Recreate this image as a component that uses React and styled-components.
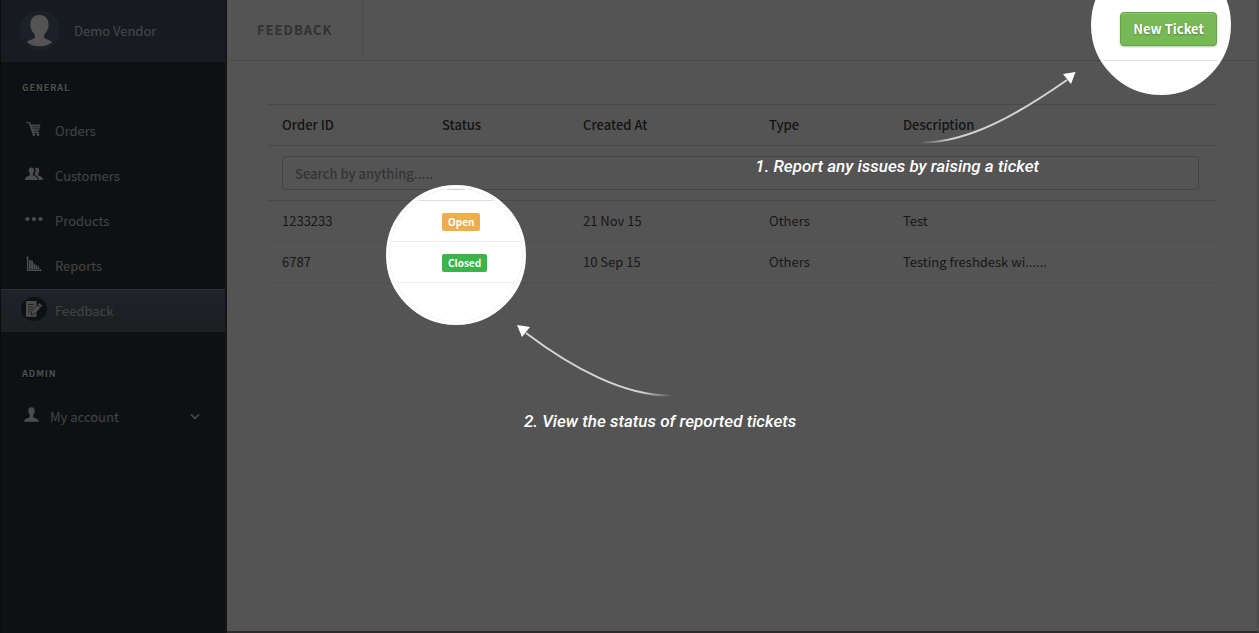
import React from "react";
import styled, { createGlobalStyle, css } from "styled-components";

const GlobalStyle = createGlobalStyle`
  *, *::before, *::after { box-sizing: border-box; }
  body {
    margin: 0;
    background: #fff;
    color: #4a4a4a;
    font-family: "Noto Sans CJK SC", "Open Sans", sans-serif;
    font-size: 13px;
    line-height: 20px;
  }
`;

const Page = styled.div`
  position: relative;
  display: flex;
  min-height: 100vh;
  overflow: hidden;
`;

/* ---------- sidebar ---------- */

const Sidebar = styled.aside`
  flex: 0 0 227px;
  background: #2b363d;
  border-right: 2px solid #394349;
  border-left: 1px solid #20282d;
`;

const Profile = styled.div`
  display: flex;
  align-items: center;
  gap: 14px;
  height: 62px;
  padding-left: 18px;
  background: linear-gradient(#465064, #4a5763);
  border-bottom: 1px solid #56626c;
  color: #d3d7db;
  font-size: 13px;
`;

const Avatar = styled.svg`
  width: 41px;
  height: 41px;
`;

const NavHeading = styled.h2`
  margin: 0;
  padding: 16px 0 0 21px;
  color: #f0f0f0;
  font-size: 9px;
  font-weight: 700;
  line-height: 20px;
  letter-spacing: 1px;
  text-shadow: 0 1px 1px #000;
`;

const NavList = styled.ul`
  display: flex;
  flex-direction: column;
  gap: 2px;
  margin: 0;
  padding: 11px 0 16px;
  list-style: none;
`;

const NavLink = styled.a`
  display: flex;
  align-items: center;
  gap: 8px;
  height: 43px;
  padding: 0 25px 0 20px;
  color: #c8ccce;
  text-decoration: none;
  ${(p) =>
    p.$active &&
    css`
      background: linear-gradient(#606879, #565c67);
      border-top: 1px solid #878c95;
      border-bottom: 1px solid #5f6670;
    `}
`;

const NavIcon = styled.span`
  display: flex;
  align-items: center;
  justify-content: center;
  width: ${(p) => (p.$narrow ? "21px" : "26px")};
  height: 24px;
  margin-bottom: 4px;
  border-radius: 50%;
  color: #e6e6e6;
  background: ${(p) => (p.$active ? "#2b363d" : "none")};
`;

const NavText = styled.span`
  flex: 1;
`;

/* ---------- main area ---------- */

const Main = styled.main`
  flex: 1;
  min-width: 0;
  border-right: 2px solid #e2e2e2;
  border-bottom: 2px solid #8c8488;
`;

const TopBar = styled.header`
  display: flex;
  align-items: center;
  justify-content: space-between;
  height: 61px;
  padding-right: 40px;
  border-bottom: 1px solid #dfdfdf;
`;

const PageTitle = styled.h1`
  display: flex;
  align-items: center;
  align-self: stretch;
  width: 136px;
  margin: 0;
  padding-left: 30px;
  border-right: 1px solid #e2e2e2;
  color: #989898;
  font-size: 13px;
  font-weight: 700;
  letter-spacing: 1px;
`;

const NewTicket = styled.button`
  height: 34px;
  margin-bottom: 2px;
  padding: 0 12px;
  border: 1px solid #64a540;
  border-radius: 4px;
  background: #77b955;
  box-shadow: inset 0 1px 0 #8fc972, 0 1px 2px rgba(0, 0, 0, 0.25);
  color: #fff;
  font: 700 13px/20px "Noto Sans CJK SC", "Open Sans", sans-serif;
  text-shadow: 0 1px 2px rgba(0, 0, 0, 0.3);
`;

const Content = styled.section`
  padding: 43px 40px 40px;
`;

const Table = styled.table`
  width: 100%;
  border-collapse: collapse;
  table-layout: fixed;
  text-align: left;
`;

const Col = styled.col`
  width: ${(p) => p.$width};
`;

const HeadCell = styled.th`
  height: 41px;
  padding: 0 15px;
  border-top: 1px solid #dcdcdc;
  border-bottom: 1px solid #dcdcdc;
  color: #404040;
  font-weight: 500;
`;

const SearchCell = styled.td`
  padding: 10px 18px 10px 15px;
  border-bottom: 1px solid #d8dfe6;
`;

const SearchInput = styled.input`
  display: block;
  width: 100%;
  height: 34px;
  padding: 0 12px;
  border: 1px solid #cacaca;
  border-radius: 4px;
  background: #fff;
  font: 500 13px/20px "Noto Sans CJK SC", "Open Sans", sans-serif;
  &::placeholder { color: #a0a0a0; opacity: 1; }
`;

const Cell = styled.td`
  height: 41px;
  padding: 0 15px;
  border-bottom: 1px solid #edf0f2;
`;

const Badge = styled.span`
  display: inline-block;
  padding: 0 6px;
  border-radius: 2px;
  background: ${(p) => (p.$open ? "#f0ad4e" : "#3ab54a")};
  color: #fff;
  font-size: 10px;
  font-weight: 700;
  line-height: 18px;
  vertical-align: middle;
`;

/* ---------- guided tour ---------- */

const Dim = styled.div`
  position: absolute;
  inset: 0;
  background: rgba(0, 0, 0, 0.67);
  pointer-events: none;
  mask-image:
    radial-gradient(circle at 456px 255px, transparent 68px, #000 69px),
    radial-gradient(circle at calc(100% - 98px) 25px, transparent 68px, #000 69px);
  mask-composite: intersect;
`;

const Spotlight = styled.div`
  position: absolute;
  width: 140px;
  height: 140px;
  border: 3px solid #fff;
  border-radius: 50%;
  pointer-events: none;
`;

const TicketSpotlight = styled(Spotlight)`
  top: -45px;
  right: 28px;
`;

const StatusSpotlight = styled(Spotlight)`
  top: 185px;
  left: 386px;
  box-shadow: inset 0 0 0 1px #f3f3f3;
`;

const Hint = styled.p`
  position: absolute;
  margin: 0;
  color: #fff;
  font: italic 500 17px/20px Roboto, sans-serif;
  white-space: nowrap;
`;

const TicketHint = styled(Hint)`
  top: 156px;
  right: 220px;
`;

const StatusHint = styled(Hint)`
  top: 411px;
  left: 524px;
`;

const Arrow = styled.svg`
  position: absolute;
  width: 160px;
  height: 80px;
  pointer-events: none;
`;

const TicketArrow = styled(Arrow)`
  top: 68px;
  right: 179px;
`;

const StatusArrow = styled(Arrow)`
  top: 321px;
  left: 513px;
`;

/* ---------- icons ---------- */

const CartIcon = () => (
  <svg width="16" height="16" viewBox="0 0 16 16" aria-hidden="true">
    <path d="M.5 1.600h2.900L6.600 11.200h6" fill="none" stroke="currentColor" strokeWidth="1.400" />
    <path d="M4 3.400h10.600l-1.800 6.600H6.300z" fill="currentColor" />
    <path d="M5 5.600h9M5.800 7.700h7.600M7.600 3.600l.8 6.200M10 3.600v6.200M12.400 3.600l-.8 6.200" stroke="#2b363d" strokeWidth=".4" />
    <circle cx="7.800" cy="13.500" r="1.400" fill="currentColor" />
    <circle cx="12" cy="13.500" r="1.400" fill="currentColor" />
  </svg>
);

const PeopleIcon = () => (
  <svg width="18" height="14" viewBox="0 0 18 14" fill="currentColor" aria-hidden="true">
    <path d="M6.4.4c2 0 2.8 1.3 2.7 3.1-.1 1.500-.6 2.300-1.200 3.100v1.700c.5.8 4.300 1.200 4.600 3.200l.2 1.500H0l.2-1.500c.3-2 4-2.400 4.700-3.200V6.600C4.300 5.800 3.800 5 3.700 3.500 3.600 1.700 4.400.4 6.400.4z" />
    <path d="M11.600.7c2 0 2.800 1.200 2.700 3-.1 1.400-.6 2.100-1.100 2.900v1.600c.5.8 4.200 1.300 4.500 3.300l.2 1.500h-4.200c-.1-2.800-1.400-3.900-3.800-4.700l-.3-1.500c1.200-1.500 1.500-4 .4-5.700.4-.3.900-.4 1.600-.4z" />
  </svg>
);

const DotsIcon = () => (
  <svg width="18" height="6" viewBox="0 0 18 6" fill="currentColor" aria-hidden="true">
    <circle cx="2.500" cy="3" r="2.100" />
    <circle cx="9" cy="3" r="2.100" />
    <circle cx="15.500" cy="3" r="2.100" />
  </svg>
);

const ChartIcon = () => (
  <svg width="16" height="16" viewBox="0 0 16 16" aria-hidden="true">
    <path d="M1.500 1.500v12.800H15" fill="none" stroke="currentColor" strokeWidth="1.200" />
    <path d="M0 2.500 1.500 0 3 2.500zM14 12.800l2 1.500-2 1.500z" fill="currentColor" />
    <path d="M2.800 4h1.900v9.600H2.800zM5.100 4.800H7v8.800H5.100zM7.400 7.500h1.800v6.100H7.400zM9.600 9h1.600v4.600H9.600zM11.600 10.500h1.600v3.100h-1.600z" fill="currentColor" />
  </svg>
);

const NoteIcon = () => (
  <svg width="18" height="18" viewBox="0 0 18 18" aria-hidden="true">
    <path d="M1 1h10.500v15.800H1z" fill="currentColor" />
    <path d="M3 4.500h6M3 7h5M3 9.500h3.500M3 12h2.500" stroke="#2b363d" strokeWidth=".7" />
    <path d="m6 14.800 1-4.300 7.400-7.700 3.100 3-7.300 7.700z" fill="currentColor" stroke="#2b363d" strokeWidth=".8" />
    <path d="m12.600 4.700 3 3" stroke="#2b363d" strokeWidth=".8" />
  </svg>
);

const PersonIcon = () => (
  <svg width="15" height="15" viewBox="0 0 15 15" fill="currentColor" aria-hidden="true">
    <path d="M7.500.3c2.500 0 3.400 1.700 3.200 3.800-.2 1.900-.8 2.900-1.500 3.800v2c.6 1 5 1.500 5.400 3.600l.2 1.200H.2l.2-1.200c.4-2.100 4.800-2.600 5.400-3.600v-2c-.7-.9-1.300-1.900-1.500-3.800C4.100 2 5 .3 7.500.3z" />
  </svg>
);

const Chevron = () => (
  <svg width="10" height="8" viewBox="0 0 10 8" fill="none" stroke="currentColor" strokeWidth="1.800" aria-hidden="true">
    <path d="m1 1.500 4 4 4-4" />
  </svg>
);

const menu = [
  { label: "Orders", Icon: CartIcon },
  { label: "Customers", Icon: PeopleIcon },
  { label: "Products", Icon: DotsIcon },
  { label: "Reports", Icon: ChartIcon },
  { label: "Feedback", Icon: NoteIcon, active: true },
];

const tickets = [
  { id: "1233233", status: "Open", created: "21 Nov 15", type: "Others", description: "Test" },
  { id: "6787", status: "Closed", created: "10 Sep 15", type: "Others", description: "Testing freshdesk wi......" },
];

export default function App() {
  return (
    <Page>
      <GlobalStyle />
      <Sidebar>
        <Profile>
          <Avatar viewBox="0 0 41 41" aria-hidden="true">
            <circle cx="20.500" cy="20.500" r="20" fill="#56627a" />
            <path
              d="M20.500 5c6 0 9.300 4 9.100 9.700-.2 4.600-2 7.300-4.500 9.800v3.200c1.300 1.700 6 1.900 7.900 4.400-3 3-7.300 4.200-12.500 4.200S11 35.100 8 32.100c1.900-2.500 6.600-2.700 7.900-4.400v-3.200c-2.500-2.500-4.300-5.200-4.500-9.800C11.200 9 14.500 5 20.500 5z"
              fill="#fff"
            />
          </Avatar>
          Demo Vendor
        </Profile>
        <nav>
          <NavHeading>GENERAL</NavHeading>
          <NavList>
            {menu.map(({ label, Icon, active }) => (
              <li key={label}>
                <NavLink href="#" $active={active}>
                  <NavIcon $active={active}>
                    <Icon />
                  </NavIcon>
                  <NavText>{label}</NavText>
                </NavLink>
              </li>
            ))}
          </NavList>
          <NavHeading>ADMIN</NavHeading>
          <NavList>
            <li>
              <NavLink href="#">
                <NavIcon $narrow>
                  <PersonIcon />
                </NavIcon>
                <NavText>My account</NavText>
                <Chevron />
              </NavLink>
            </li>
          </NavList>
        </nav>
      </Sidebar>

      <Main>
        <TopBar>
          <PageTitle>FEEDBACK</PageTitle>
          <NewTicket type="button">New Ticket</NewTicket>
        </TopBar>
        <Content>
          <Table>
            <colgroup>
              <Col $width="160px" />
              <Col $width="141px" />
              <Col $width="186px" />
              <Col $width="134px" />
              <Col $width="auto" />
            </colgroup>
            <thead>
              <tr>
                <HeadCell scope="col">Order ID</HeadCell>
                <HeadCell scope="col">Status</HeadCell>
                <HeadCell scope="col">Created At</HeadCell>
                <HeadCell scope="col">Type</HeadCell>
                <HeadCell scope="col">Description</HeadCell>
              </tr>
            </thead>
            <tbody>
              <tr>
                <SearchCell colSpan={5}>
                  <SearchInput type="text" aria-label="Search tickets" placeholder="Search by anything....." />
                </SearchCell>
              </tr>
              {tickets.map((t) => (
                <tr key={t.id}>
                  <Cell>{t.id}</Cell>
                  <Cell>
                    <Badge $open={t.status === "Open"}>{t.status}</Badge>
                  </Cell>
                  <Cell>{t.created}</Cell>
                  <Cell>{t.type}</Cell>
                  <Cell>{t.description}</Cell>
                </tr>
              ))}
            </tbody>
          </Table>
        </Content>
      </Main>

      <Dim />
      <TicketSpotlight />
      <StatusSpotlight />
      <TicketArrow viewBox="0 0 160 80" aria-hidden="true">
        <defs>
          <linearGradient id="fadeLeft" gradientUnits="userSpaceOnUse" x1="1" y1="0" x2="32" y2="0">
            <stop offset="0" stopColor="#fff" stopOpacity="0" />
            <stop offset="1" stopColor="#fff" stopOpacity=".75" />
          </linearGradient>
        </defs>
        <path d="M1 74.500C50 75 101 44 147 12" fill="none" stroke="url(#fadeLeft)" strokeWidth="2" />
        <path d="M155.500 4 151 16l-8-10z" fill="#fff" />
      </TicketArrow>
      <StatusArrow viewBox="0 0 160 80" aria-hidden="true">
        <defs>
          <linearGradient id="fadeRight" gradientUnits="userSpaceOnUse" x1="159" y1="0" x2="128" y2="0">
            <stop offset="0" stopColor="#fff" stopOpacity="0" />
            <stop offset="1" stopColor="#fff" stopOpacity=".75" />
          </linearGradient>
        </defs>
        <path d="M158 74.500C112 75 59 47 13 12" fill="none" stroke="url(#fadeRight)" strokeWidth="2" />
        <path d="M4 4l13 2-8 10z" fill="#fff" />
      </StatusArrow>
      <TicketHint>1. Report any issues by raising a ticket</TicketHint>
      <StatusHint>2. View the status of reported tickets</StatusHint>
    </Page>
  );
}
